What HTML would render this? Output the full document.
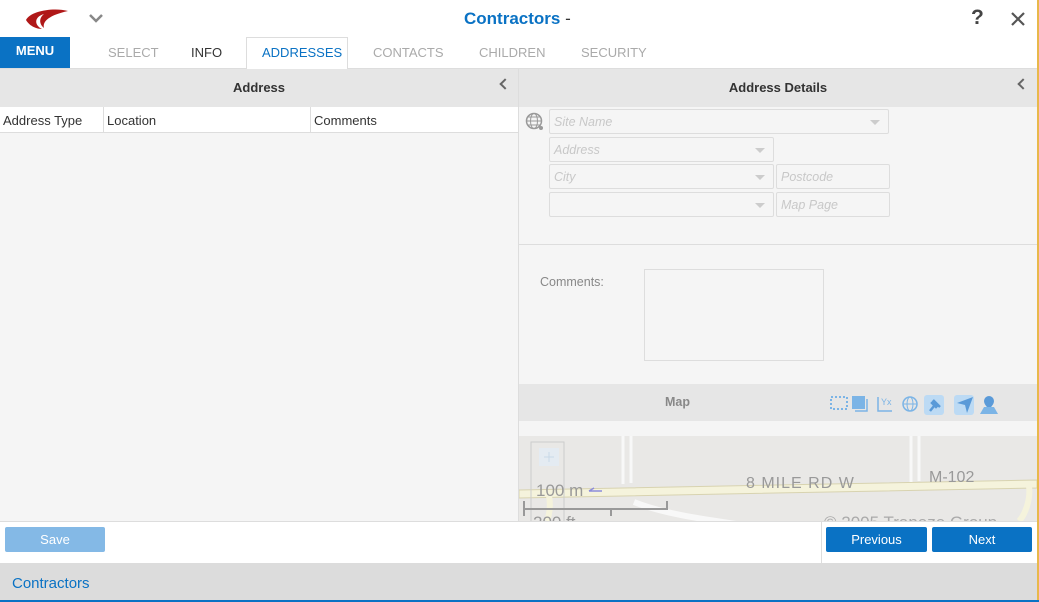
<!DOCTYPE html>
<html><head><style>
*{box-sizing:border-box;margin:0;padding:0}
body{width:1039px;height:602px;overflow:hidden;background:#fff;font-family:"Liberation Sans",sans-serif;position:relative;font-size:13px}
.a{position:absolute}
.inp{position:absolute;border:1px solid #ddd;border-radius:2px;background:#f5f5f5;color:#c8c8c8;font-style:italic;font-size:12.5px;padding:5px 4px}
.dd:after{content:"";position:absolute;right:8px;top:10px;border:5px solid transparent;border-top:5px solid #ccc}
.tab{position:absolute;top:45px;font-size:13px;color:#aaa}
.btn{position:absolute;color:#fff;font-size:13px;text-align:center;line-height:25px;border-radius:2px}
.chev{position:absolute;width:8px;height:8px;border-left:2px solid #666;border-bottom:2px solid #666;transform:rotate(45deg)}
</style></head><body>
<div class="a" style="right:0;top:0;width:2px;height:602px;background:#e8b84a"></div>
<svg class="a" style="left:24px;top:7px" width="46" height="26" viewBox="0 0 46 26"><path d="M44 4 C30 0 6 4 2 13 C6 20 14 22 18 22 C10 18 10 10 20 7 C16 10 14 16 20 21 C18 14 26 8 44 4Z" fill="#b01818"/></svg>
<svg class="a" style="left:89px;top:13px" width="14" height="10"><path d="M1 2 L7 8 L13 2" stroke="#888" stroke-width="2.5" fill="none"/></svg>
<div class="a" style="left:464px;top:9px;font-size:17px;font-weight:bold;color:#0a72c4">Contractors <span style="color:#333;font-weight:normal">-</span></div>
<div class="a" style="left:971px;top:6px;font-size:21px;font-weight:bold;color:#444">?</div>
<svg class="a" style="left:1010px;top:11px" width="16" height="16"><path d="M2 2L14 14M14 2L2 14" stroke="#555" stroke-width="2.2"/></svg>
<div class="a" style="left:0;top:37px;width:70px;height:31px;background:#0a72c4;color:#fff;font-weight:bold;font-size:13px;text-align:center;line-height:28px">MENU</div>
<div class="a" style="left:0;top:68px;width:1037px;height:1px;background:#ddd"></div>
<div class="a" style="left:246px;top:37px;width:102px;height:32px;border:1px solid #ddd;border-bottom:none;background:#fff"></div>
<div class="tab" style="left:108px">SELECT</div>
<div class="tab" style="left:191px;color:#333">INFO</div>
<div class="tab" style="left:262px;color:#0a72c4">ADDRESSES</div>
<div class="tab" style="left:373px">CONTACTS</div>
<div class="tab" style="left:479px">CHILDREN</div>
<div class="tab" style="left:581px">SECURITY</div>
<div class="a" style="left:0;top:69px;width:518px;height:38px;background:#e6e6e6;text-align:center;line-height:38px;font-weight:bold;color:#333">Address</div>
<div class="chev" style="left:501px;top:80px"></div>
<div class="a" style="left:0;top:107px;width:518px;height:26px;background:#fff;border-bottom:1px solid #ddd"></div>
<div class="a" style="left:103px;top:107px;width:1px;height:26px;background:#ddd"></div>
<div class="a" style="left:310px;top:107px;width:1px;height:26px;background:#ddd"></div>
<div class="a" style="left:3px;top:113px;color:#333">Address Type</div>
<div class="a" style="left:107px;top:113px;color:#333">Location</div>
<div class="a" style="left:314px;top:113px;color:#333">Comments</div>
<div class="a" style="left:0;top:133px;width:518px;height:388px;background:#f5f5f5"></div>
<div class="a" style="left:518px;top:69px;width:1px;height:452px;background:#ddd"></div>
<div class="a" style="left:519px;top:69px;width:518px;height:452px;background:#f5f5f5"></div>
<div class="a" style="left:519px;top:69px;width:518px;height:38px;background:#e6e6e6;text-align:center;line-height:38px;font-weight:bold;color:#333">Address Details</div>
<div class="chev" style="left:1019px;top:80px"></div>
<svg class="a" style="left:525px;top:112px" width="20" height="20"><circle cx="9" cy="9" r="7.5" fill="none" stroke="#999" stroke-width="1.5"/><ellipse cx="9" cy="9" rx="3.5" ry="7.5" fill="none" stroke="#999"/><path d="M1.5 9H16.5M3 5H15M3 13H15" stroke="#999"/><circle cx="16" cy="16" r="2" fill="#999"/></svg>
<div class="inp dd" style="left:549px;top:109px;width:340px;height:25px">Site Name</div>
<div class="inp dd" style="left:549px;top:137px;width:225px;height:25px">Address</div>
<div class="inp dd" style="left:549px;top:164px;width:225px;height:25px">City</div>
<div class="inp" style="left:776px;top:164px;width:114px;height:25px">Postcode</div>
<div class="inp dd" style="left:549px;top:192px;width:225px;height:25px"></div>
<div class="inp" style="left:776px;top:192px;width:114px;height:25px">Map Page</div>
<div class="a" style="left:519px;top:244px;width:518px;height:1px;background:#ddd"></div>
<div class="a" style="left:540px;top:275px;color:#888;font-size:12.5px">Comments:</div>
<div class="a" style="left:644px;top:269px;width:180px;height:92px;border:1px solid #ddd;background:#f5f5f5"></div>
<div class="a" style="left:519px;top:384px;width:518px;height:37px;background:#e6e6e6"></div>
<div class="a" style="left:665px;top:395px;color:#888;font-weight:bold;font-size:12.5px">Map</div>
<svg class="a" style="left:830px;top:394px" width="172" height="22">
<rect x="1" y="3" width="16" height="12" fill="none" stroke="#7bb4e6" stroke-width="2" stroke-dasharray="2 2"/><rect x="22" y="2" width="13" height="13" fill="#7bb4e6"/><path d="M37 5V17H25" stroke="#7bb4e6" stroke-width="1.5" fill="none"/>
<path d="M48 3V17H62" stroke="#7bb4e6" stroke-width="1.5" fill="none"/><text x="51" y="11" font-size="9" fill="#7bb4e6" font-family="Liberation Sans">Yx</text>
<circle cx="80" cy="10" r="7" fill="none" stroke="#7bb4e6" stroke-width="1.5"/><ellipse cx="80" cy="10" rx="3" ry="7" fill="none" stroke="#7bb4e6"/><path d="M73 10H87" stroke="#7bb4e6"/>
<rect x="94" y="1" width="20" height="20" rx="3" fill="#bcdaf4"/><path d="M100 17L104 12M103 6L110 13M104 7L108 11L106 13L102 9Z" stroke="#5a9ad8" stroke-width="2.5" fill="#5a9ad8"/>
<rect x="124" y="1" width="20" height="20" rx="3" fill="#bcdaf4"/><path d="M127 9L143 3L137 19L135 11Z" fill="#5a9ad8"/>
<path d="M159 2a5 5 0 0 1 5 5c0 4-5 8-5 8s-5-4-5-8a5 5 0 0 1 5-5z" fill="#5a9ad8"/><path d="M150 20L154 13H164L168 20Z" fill="#7bb4e6"/>
</svg>
<div class="a" style="left:519px;top:436px;width:518px;height:85px;background:#e9e8e6;overflow:hidden">
<svg width="518" height="85" style="position:absolute;left:0;top:0">
<path d="M0 54 L518 44 L518 52 L0 62Z" fill="#f5f3dc" stroke="#d8d3b0"/>
<path d="M104 0V48M112 0V47M392 0V46M400 0V45" stroke="#f8f8f8" stroke-width="3"/>
<path d="M30 60 C32 70 30 80 28 85 M510 50 C512 65 505 80 500 85" stroke="#f5f3dc" stroke-width="6" fill="none"/>
<path d="M115 66 C150 80 200 85 230 90" stroke="#f8f8f8" stroke-width="6" fill="none"/>
<rect x="12" y="6" width="33" height="80" fill="none" stroke="#ccc"/>
<rect x="20" y="12" width="20" height="18" fill="#e4ebf2"/>
<path d="M30 16V26M25 21H35" stroke="#c8d8e8"/>
<path d="M5 65V80M5 73H148V65M92 73V80" stroke="#999" stroke-width="2" fill="none"/>
<text x="17" y="60" font-size="17" fill="#999" font-family="Liberation Sans">100 m</text><path d="M70 55H83M70 55L75 52" stroke="#8c8cdc" stroke-width="1.5"/>
<text x="227" y="52" font-size="16" fill="#999" font-family="Liberation Sans" letter-spacing="1">8 MILE RD W</text>
<text x="410" y="46" font-size="16" fill="#999" font-family="Liberation Sans">M-102</text>
<text x="14" y="92" font-size="17" fill="#999" font-family="Liberation Sans">200 ft</text>
<text x="305" y="92" font-size="17" fill="#aaa" font-family="Liberation Sans">© 2005 Trapeze Group</text>
</svg></div>
<div class="a" style="left:0;top:521px;width:1037px;height:1px;background:#ddd"></div>
<div class="a" style="left:821px;top:521px;width:1px;height:42px;background:#ddd"></div>
<div class="btn" style="left:5px;top:527px;width:100px;background:#84b9e6">Save</div>
<div class="btn" style="left:826px;top:527px;width:101px;background:#0a72c4">Previous</div>
<div class="btn" style="left:932px;top:527px;width:100px;background:#0a72c4">Next</div>
<div class="a" style="left:0;top:563px;width:1037px;height:37px;background:#dcdcdc"></div>
<div class="a" style="left:0;top:600px;width:1039px;height:2px;background:#0a72c4"></div>
<div class="a" style="left:12px;top:575px;color:#0a72c4;font-size:15px">Contractors</div>
</body></html>
